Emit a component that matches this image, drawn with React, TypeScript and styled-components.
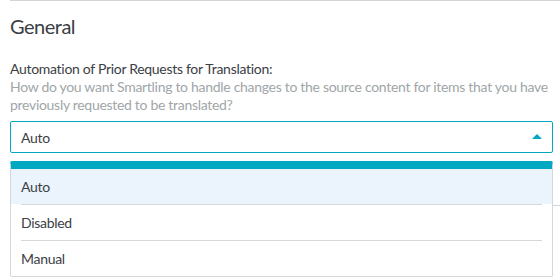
import styled, { createGlobalStyle } from "styled-components";

const GlobalStyle = createGlobalStyle`
  html, body {
    margin: 0;
    padding: 0;
    background: #ffffff;
  }
  body {
    font-family: "Lato", "Liberation Sans", sans-serif;
    color: #3b4045;
  }
`;

const Page = styled.div`
  padding-left: 10px;
  min-height: 280px;
`;

const Section = styled.section`
  border-top: 1px solid #d3d6d8;
  padding: 13px 7px 0 0;
`;

const Heading = styled.h2`
  margin: 0;
  font-size: 20px;
  line-height: 24px;
  font-weight: 400;
  letter-spacing: -0.5px;
  color: #3b4045;
`;

const Field = styled.div`
  margin-top: 22px;
  letter-spacing: -0.3px;
`;

const Label = styled.div`
  font-size: 14px;
  line-height: 18px;
  color: #3b4045;
`;

const Help = styled.div`
  font-size: 14px;
  line-height: 18px;
  color: #a0a6a9;
`;

const SelectWrap = styled.div`
  position: relative;
  margin-top: 7px;
`;

const SelectBox = styled.div`
  height: 30px;
  border: 1px solid #00a8c1;
  border-radius: 2px;
  display: flex;
  align-items: center;
  justify-content: space-between;
  padding: 0 10px 0 10px;
  font-size: 14px;
  color: #3b4045;
`;

const Caret = styled.span`
  width: 0;
  height: 0;
  border-left: 5px solid transparent;
  border-right: 5px solid transparent;
  border-bottom: 5px solid #00a8c1;
  margin-top: -2px;
`;

const Divider = styled.div`
  margin: 52px -7px 0 0;
  border-top: 1px solid #d3d6d8;
`;

const Menu = styled.ul`
  position: absolute;
  top: 40px;
  left: 0;
  right: 0;
  z-index: 2;
  margin: 0;
  padding: 0;
  list-style: none;
  background: #ffffff;
  border: 1px solid #d3d8da;
  border-top: 8px solid #00a8c1;
  border-radius: 2px;
`;

const Option = styled.li<{ $active?: boolean }>`
  background: ${({ $active }) => ($active ? "#ebf3fd" : "transparent")};
  padding: 0 10px;
  font-size: 14px;
  color: #3b4045;
`;

const OptionInner = styled.div<{ $first?: boolean }>`
  height: 35px;
  display: flex;
  align-items: center;
  border-top: ${({ $first }) => ($first ? "none" : "1px solid #d3d8da")};
`;

const options = ["Auto", "Disabled", "Manual"];

export default function App() {
  return (
    <Page>
      <GlobalStyle />
      <Section>
        <Heading>General</Heading>
        <Field>
          <Label>Automation of Prior Requests for Translation:</Label>
          <Help>
            How do you want Smartling to handle changes to the source content for items that you have
            previously requested to be translated?
          </Help>
          <SelectWrap>
            <SelectBox>
              <span>Auto</span>
              <Caret />
            </SelectBox>
            <Divider />
            <Menu>
              {options.map((o, i) => (
                <Option key={o} $active={i === 0}>
                  <OptionInner $first={i === 0}>{o}</OptionInner>
                </Option>
              ))}
            </Menu>
          </SelectWrap>
        </Field>
      </Section>
    </Page>
  );
}
